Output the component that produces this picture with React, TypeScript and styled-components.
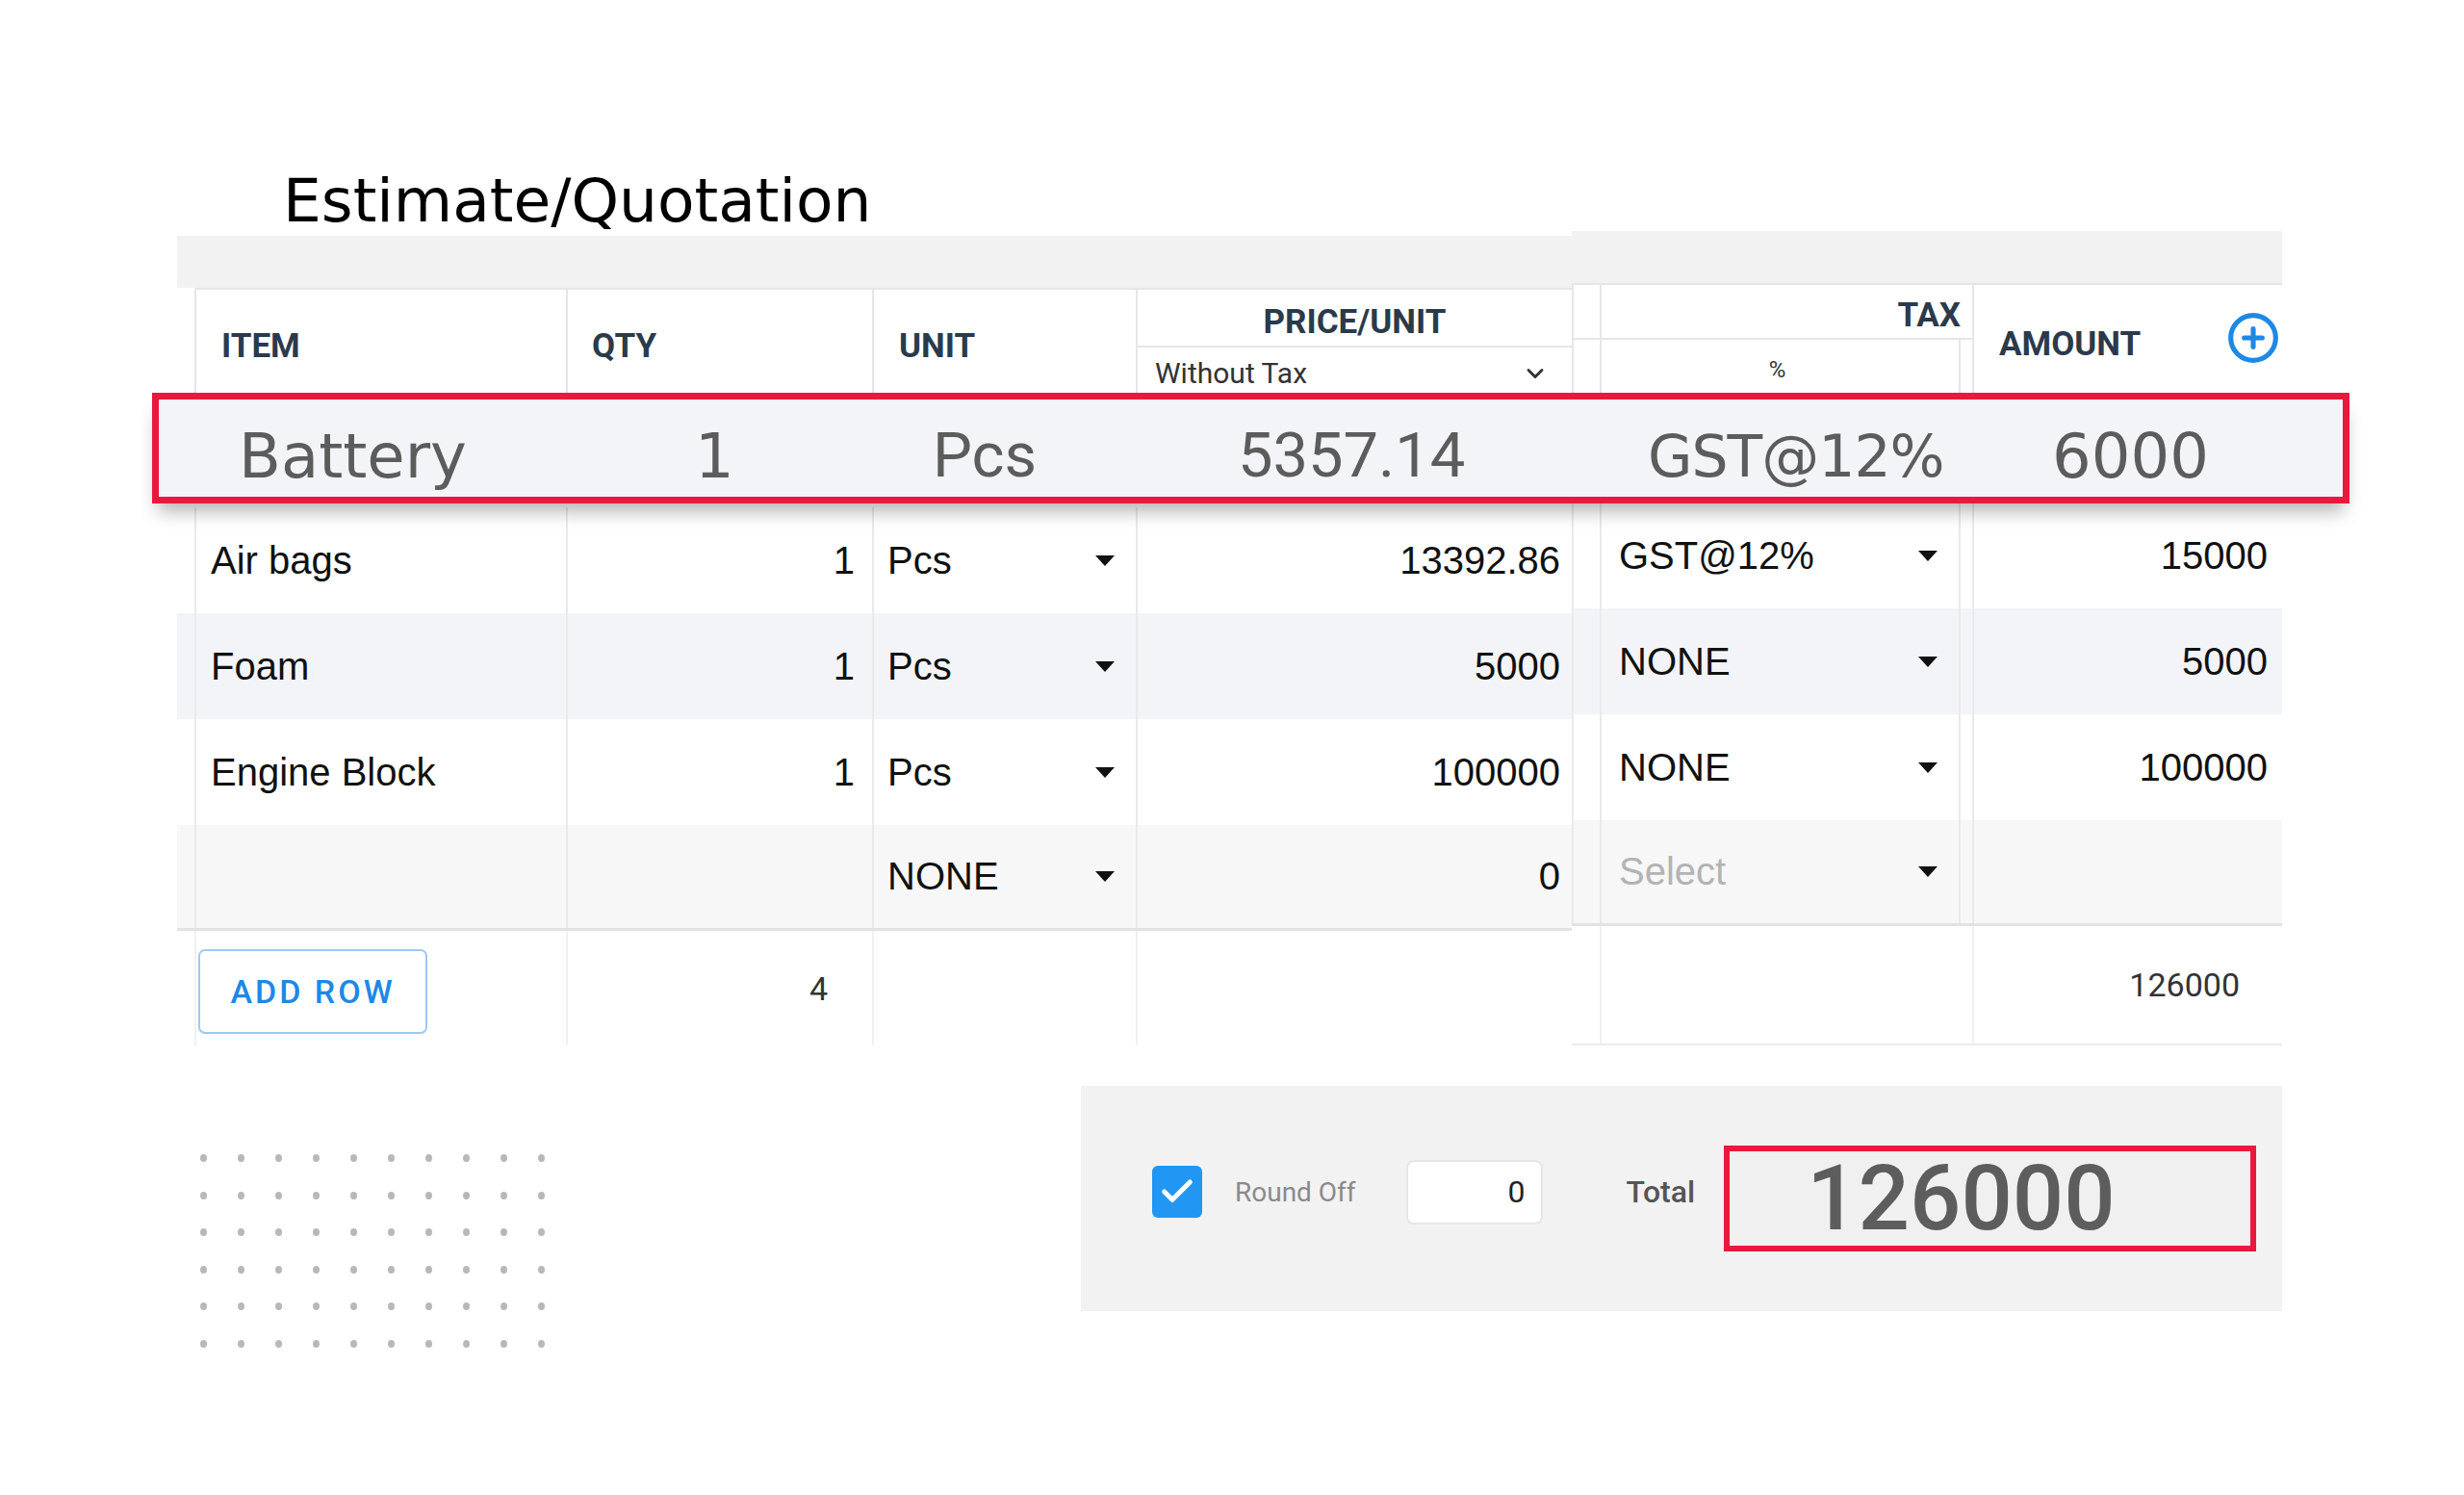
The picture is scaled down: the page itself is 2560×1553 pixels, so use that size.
import styled, { createGlobalStyle } from "styled-components";
import { Check, ChevronDown, CirclePlus } from "lucide-react";

const GlobalStyle = createGlobalStyle`
  html, body {
    margin: 0;
    padding: 0;
    background: #ffffff;
  }
  body {
    font-family: "Liberation Sans", Arial, sans-serif;
  }
  * {
    box-sizing: border-box;
  }
`;

const RED = "#e8193f";
const LINE = "#e6e6e6";
const POPPINS = `"DejaVu Sans", "Open Sans", sans-serif`;
const ROBOTO = `Roboto, "Liberation Sans", sans-serif`;

const Page = styled.main`
  width: 2560px;
  min-height: 1553px;
  padding: 178px 0 0 184px;
`;

const Title = styled.h1`
  margin: 0 0 5px 110px;
  font-family: ${POPPINS};
  font-weight: 400;
  font-size: 63px;
  line-height: 62px;
  color: #000;
`;

const Sheet = styled.section`
  width: 2187px;
`;

const HeadRow = styled.div`
  display: flex;
  align-items: flex-start;
`;

const HeadPane = styled.div<{ $w: number; $shift?: number }>`
  width: ${(p) => p.$w}px;
  margin-top: ${(p) => p.$shift ?? 0}px;
`;

const Band = styled.div`
  height: 54px;
  background: #f2f2f2;
`;

const HeadCells = styled.div<{ $h: number }>`
  display: flex;
  height: ${(p) => p.$h}px;
`;

const Gutter = styled.div<{ $w: number }>`
  width: ${(p) => p.$w}px;
  flex-shrink: 0;
`;

const HeadCell = styled.div<{ $w: number; $pl?: number; $pr?: number }>`
  width: ${(p) => p.$w}px;
  flex-shrink: 0;
  display: flex;
  align-items: center;
  justify-content: space-between;
  padding: 10px ${(p) => p.$pr ?? 0}px 0 ${(p) => p.$pl ?? 0}px;
  border-left: 2px solid ${LINE};
  border-top: 2px solid ${LINE};
  background: #fff;
  font-family: ${ROBOTO};
  font-weight: 700;
  font-size: 35px;
  color: #2b3a4b;
`;

const AddIcon = styled(CirclePlus)`
  margin-top: -12px;
`;

const SplitCell = styled.div<{ $w: number; $top: number }>`
  width: ${(p) => p.$w}px;
  flex-shrink: 0;
  display: grid;
  grid-template-rows: ${(p) => p.$top}px 1fr;
  border-left: 2px solid ${LINE};
  border-top: 2px solid ${LINE};
  background: #fff;
`;

const SplitTop = styled.div<{ $align: string; $pr?: number }>`
  display: flex;
  align-items: center;
  justify-content: ${(p) => p.$align};
  padding: 8px ${(p) => p.$pr ?? 0}px 0 0;
  border-bottom: 2px solid ${LINE};
  font-family: ${ROBOTO};
  font-weight: 700;
  font-size: 35px;
  color: #2b3a4b;
`;

const SplitBottom = styled.div<{ $edge?: boolean }>`
  display: flex;
  align-items: center;
  justify-content: space-between;
  padding: 6px 24px 0 18px;
  margin-right: ${(p) => (p.$edge ? 12 : 0)}px;
  border-right: ${(p) => (p.$edge ? `2px solid ${LINE}` : "none")};
  font-family: ${ROBOTO};
  font-size: 30px;
  color: #333;
`;

const Percent = styled.span`
  flex: 1;
  text-align: center;
  font-size: 24px;
`;

const Highlight = styled.div`
  position: relative;
  z-index: 2;
  height: 115px;
  margin: 0 -70px 0 -26px;
  padding-top: 16px;
  border: 7px solid ${RED};
  background: #f3f4f8;
  box-shadow: 0 14px 18px -6px rgba(0, 0, 0, 0.3);
  display: grid;
  grid-template-columns: 535px 200px 280px 482px 438px 334px;
  align-items: center;
`;

const HiText = styled.span<{ $font: "poppins" | "roboto"; $size: number; $pl: number; $ls?: number }>`
  padding-left: ${(p) => p.$pl}px;
  font-family: ${(p) => (p.$font === "poppins" ? POPPINS : ROBOTO)};
  font-size: ${(p) => p.$size}px;
  letter-spacing: ${(p) => p.$ls ?? 0}px;
  line-height: 1;
  color: #5c5c5c;
  white-space: nowrap;
`;

const Body = styled.div`
  display: flex;
  align-items: flex-start;
  margin-top: 4px;
`;

const Pane = styled.div<{ $w: number; $shift?: number }>`
  width: ${(p) => p.$w}px;
  margin-top: ${(p) => p.$shift ?? 0}px;
`;

const Row = styled.div<{ $bg: string; $h?: number; $last?: boolean }>`
  display: flex;
  height: ${(p) => p.$h ?? 110}px;
  background: ${(p) => p.$bg};
  border-bottom: ${(p) => (p.$last ? "3px solid #e2e2e2" : "none")};
`;

const Cell = styled.div<{
  $w: number;
  $align?: "left" | "right" | "between";
  $pl?: number;
  $pr?: number;
  $line?: string;
}>`
  width: ${(p) => p.$w}px;
  flex-shrink: 0;
  display: flex;
  align-items: center;
  justify-content: ${(p) =>
    p.$align === "right" ? "flex-end" : p.$align === "between" ? "space-between" : "flex-start"};
  padding: 0 ${(p) => p.$pr ?? 0}px 0 ${(p) => p.$pl ?? 0}px;
  border-left: 2px solid ${(p) => p.$line ?? "#eaeaea"};
  font-size: 40px;
  color: #111;
  white-space: nowrap;
`;

const TaxInner = styled.div`
  flex: 1;
  height: 100%;
  display: flex;
  align-items: center;
  justify-content: space-between;
  padding: 0 22px 0 18px;
  border-right: 2px solid #eaeaea;
`;

const Placeholder = styled.span`
  color: #b3b3b3;
`;

const Caret = styled.span`
  width: 0;
  height: 0;
  border-left: 10px solid transparent;
  border-right: 10px solid transparent;
  border-top: 11px solid #111;
`;

const FooterNum = styled.span`
  font-family: ${ROBOTO};
  font-size: 34px;
  color: #333;
`;

const AddRowButton = styled.button`
  width: 238px;
  height: 88px;
  margin: 7px 0 0 2px;
  border: 2px solid #9ccaf5;
  border-radius: 7px;
  background: #fff;
  font-family: ${ROBOTO};
  font-weight: 500;
  font-size: 34px;
  letter-spacing: 3px;
  color: #1e88e5;
  cursor: pointer;
`;

const FooterRight = styled.div`
  border-bottom: 2px solid #ececec;
`;

const Bottom = styled.div`
  display: flex;
  align-items: flex-start;
  justify-content: space-between;
  width: 2187px;
  margin-top: 42px;
`;

const Dots = styled.div`
  display: grid;
  grid-template-columns: repeat(10, 7px);
  grid-auto-rows: 8px;
  column-gap: 32px;
  row-gap: 30.5px;
  margin: 71px 0 0 24px;
`;

const Dot = styled.span`
  border-radius: 50%;
  background: #b8b8b8;
`;

const TotalPanel = styled.div`
  width: 1248px;
  height: 234px;
  display: flex;
  align-items: center;
  padding: 0 0 14px 74px;
  background: #f2f2f2;
`;

const CheckBox = styled.span`
  width: 52px;
  height: 54px;
  display: flex;
  align-items: center;
  justify-content: center;
  border-radius: 6px;
  background: #2196f3;
  color: #fff;
`;

const RoundLabel = styled.span`
  margin-left: 34px;
  font-family: ${ROBOTO};
  font-size: 28px;
  color: #8a8a8a;
`;

const RoundInput = styled.input`
  width: 142px;
  height: 67px;
  margin-left: 52px;
  padding: 0 16px;
  border: 2px solid #e6e6e6;
  border-radius: 8px;
  background: #fff;
  text-align: right;
  font-family: ${ROBOTO};
  font-size: 32px;
  color: #222;
  outline: none;
`;

const TotalLabel = styled.span`
  margin-left: 87px;
  font-family: ${ROBOTO};
  font-weight: 500;
  font-size: 32px;
  color: #555;
`;

const TotalBox = styled.div`
  width: 553px;
  height: 110px;
  margin: 14px 0 0 30px;
  padding-left: 80px;
  display: flex;
  align-items: center;
  border: 6px solid ${RED};
  background: #f0f0f0;
  font-family: ${ROBOTO};
  font-weight: 500;
  font-size: 94px;
  color: #5d5d5d;
`;

interface IRow {
  item: string;
  qty: string;
  unit: string;
  price: string;
  tax: string;
  amount: string;
  bg: string;
}

const rows: IRow[] = [
  { item: "Air bags", qty: "1", unit: "Pcs", price: "13392.86", tax: "GST@12%", amount: "15000", bg: "#ffffff" },
  { item: "Foam", qty: "1", unit: "Pcs", price: "5000", tax: "NONE", amount: "5000", bg: "#f3f4f8" },
  { item: "Engine Block", qty: "1", unit: "Pcs", price: "100000", tax: "NONE", amount: "100000", bg: "#ffffff" },
  { item: "", qty: "", unit: "NONE", price: "0", tax: "", amount: "", bg: "#f7f7f7" },
];

export default function App() {
  return (
    <>
      <GlobalStyle />
      <Page>
        <Title>Estimate/Quotation</Title>
        <Sheet>
          <HeadRow>
            <HeadPane $w={1449}>
              <Band />
              <HeadCells $h={109}>
                <Gutter $w={18} />
                <HeadCell $w={386} $pl={26}>ITEM</HeadCell>
                <HeadCell $w={318} $pl={25}>QTY</HeadCell>
                <HeadCell $w={274} $pl={26}>UNIT</HeadCell>
                <SplitCell $w={453} $top={60}>
                  <SplitTop $align="center">PRICE/UNIT</SplitTop>
                  <SplitBottom>
                    <span>Without Tax</span>
                    <ChevronDown size={28} strokeWidth={2.5} />
                  </SplitBottom>
                </SplitCell>
              </HeadCells>
            </HeadPane>
            <HeadPane $w={738} $shift={-5}>
              <Band />
              <HeadCells $h={114}>
                <SplitCell $w={29} $top={57}>
                  <SplitTop $align="center" />
                  <div />
                </SplitCell>
                <SplitCell $w={387} $top={57}>
                  <SplitTop $align="flex-end" $pr={12}>TAX</SplitTop>
                  <SplitBottom $edge>
                    <Percent>%</Percent>
                  </SplitBottom>
                </SplitCell>
                <HeadCell $w={322} $pl={26} $pr={2}>
                  <span>AMOUNT</span>
                  <AddIcon size={56} strokeWidth={2.2} color="#1e88e5" />
                </HeadCell>
              </HeadCells>
            </HeadPane>
          </HeadRow>

          <Highlight>
            <HiText $font="poppins" $size={64} $pl={83}>Battery</HiText>
            <HiText $font="poppins" $size={64} $pl={22}>1</HiText>
            <HiText $font="roboto" $size={65} $pl={69}>Pcs</HiText>
            <HiText $font="roboto" $size={65} $pl={106}>5357.14</HiText>
            <HiText $font="poppins" $size={60} $pl={50} $ls={-1}>GST@12%</HiText>
            <HiText $font="poppins" $size={64} $pl={32}>6000</HiText>
          </Highlight>

          <Body>
            <Pane $w={1449}>
              {rows.map((r, i) => (
                <Row key={i} $bg={r.bg} $last={i === rows.length - 1}>
                  <Gutter $w={18} />
                  <Cell $w={386} $pl={15}>{r.item}</Cell>
                  <Cell $w={318} $align="right" $pr={18}>{r.qty}</Cell>
                  <Cell $w={274} $align="between" $pl={14} $pr={22}>
                    <span>{r.unit}</span>
                    <Caret />
                  </Cell>
                  <Cell $w={453} $align="right" $pr={12}>{r.price}</Cell>
                </Row>
              ))}
              <Row $bg="#ffffff" $h={119}>
                <Gutter $w={18} />
                <Cell $w={386} $line="#f1f1f1">
                  <AddRowButton>ADD ROW</AddRowButton>
                </Cell>
                <Cell $w={318} $align="right" $pr={46} $line="#f1f1f1">
                  <FooterNum>4</FooterNum>
                </Cell>
                <Cell $w={274} $line="#f1f1f1" />
                <Cell $w={453} $line="#f1f1f1" />
              </Row>
            </Pane>
            <Pane $w={738} $shift={-5}>
              {rows.map((r, i) => (
                <Row key={i} $bg={r.bg} $last={i === rows.length - 1}>
                  <Cell $w={29} />
                  <Cell $w={387} $pr={12}>
                    <TaxInner>
                      {r.tax ? <span>{r.tax}</span> : <Placeholder>Select</Placeholder>}
                      <Caret />
                    </TaxInner>
                  </Cell>
                  <Cell $w={322} $align="right" $pr={15}>{r.amount}</Cell>
                </Row>
              ))}
              <FooterRight>
                <Row $bg="#ffffff" $h={122}>
                  <Cell $w={29} $line="transparent" />
                  <Cell $w={387} $line="#f1f1f1" />
                  <Cell $w={322} $align="right" $pr={44} $line="#f1f1f1">
                    <FooterNum>126000</FooterNum>
                  </Cell>
                </Row>
              </FooterRight>
            </Pane>
          </Body>
        </Sheet>

        <Bottom>
          <Dots>
            {Array.from({ length: 60 }).map((_, i) => (
              <Dot key={i} />
            ))}
          </Dots>
          <TotalPanel>
            <CheckBox>
              <Check size={40} strokeWidth={3} />
            </CheckBox>
            <RoundLabel>Round Off</RoundLabel>
            <RoundInput readOnly value="0" />
            <TotalLabel>Total</TotalLabel>
            <TotalBox>126000</TotalBox>
          </TotalPanel>
        </Bottom>
      </Page>
    </>
  );
}
